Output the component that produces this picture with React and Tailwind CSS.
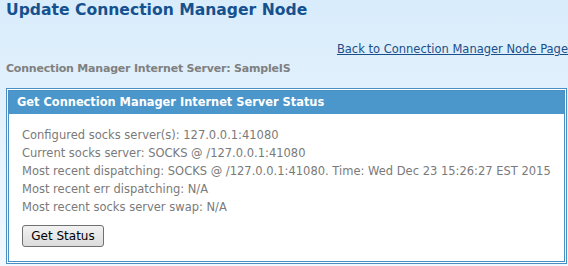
import React from "react";

const statusLines = [
  "Configured socks server(s): 127.0.0.1:41080",
  "Current socks server: SOCKS @ /127.0.0.1:41080",
  "Most recent dispatching: SOCKS @ /127.0.0.1:41080. Time: Wed Dec 23 15:26:27 EST 2015",
  "Most recent err dispatching: N/A",
  "Most recent socks server swap: N/A",
];

const App = () => {
  return (
    <div className="min-h-screen w-full overflow-hidden bg-gradient-to-b from-[#d9ecfb] to-[#f1f8fe] font-['DejaVu_Sans',Verdana,sans-serif]">
      <h1 className="pl-[6px] pt-0 text-[15.6px] font-bold leading-[20px] text-[#16518f] whitespace-nowrap">
        Update Connection Manager Node
      </h1>
      <div className="mt-[20px] text-right text-[11.5px] leading-[18px] whitespace-nowrap">
        <a href="#" className="text-[#1a4f8b] underline">
          Back to Connection Manager Node Page
        </a>
      </div>
      <h2 className="mt-[2px] pl-[6px] text-[11px] font-bold leading-[18px] tracking-[-0.2px] text-[#808080] whitespace-nowrap">
        Connection Manager Internet Server: SampleIS
      </h2>
      <div className="ml-[6px] mr-px mt-[10px] border-[3px] border-double border-[#4a8fc3] bg-white">
        <div className="flex h-[23px] items-center bg-[#4b96ca] pl-[8px] text-[11.4px] font-bold text-white whitespace-nowrap">
          Get Connection Manager Internet Server Status
        </div>
        <div className="px-[13px] pt-[12px] pb-[14px]">
          <div className="flex flex-col text-[11.5px] leading-[18px] text-[#7a7a7a]">
            {statusLines.map((line) => (
              <span key={line} className="whitespace-nowrap">{line}</span>
            ))}
          </div>
          <button className="mt-[9px] h-[22px] w-[82px] rounded-[3px] border border-[#707070] bg-gradient-to-b from-[#f2f2f2] to-[#dcdcdc] text-[12px] text-black">
            Get Status
          </button>
        </div>
      </div>
    </div>
  );
};

export default App;
